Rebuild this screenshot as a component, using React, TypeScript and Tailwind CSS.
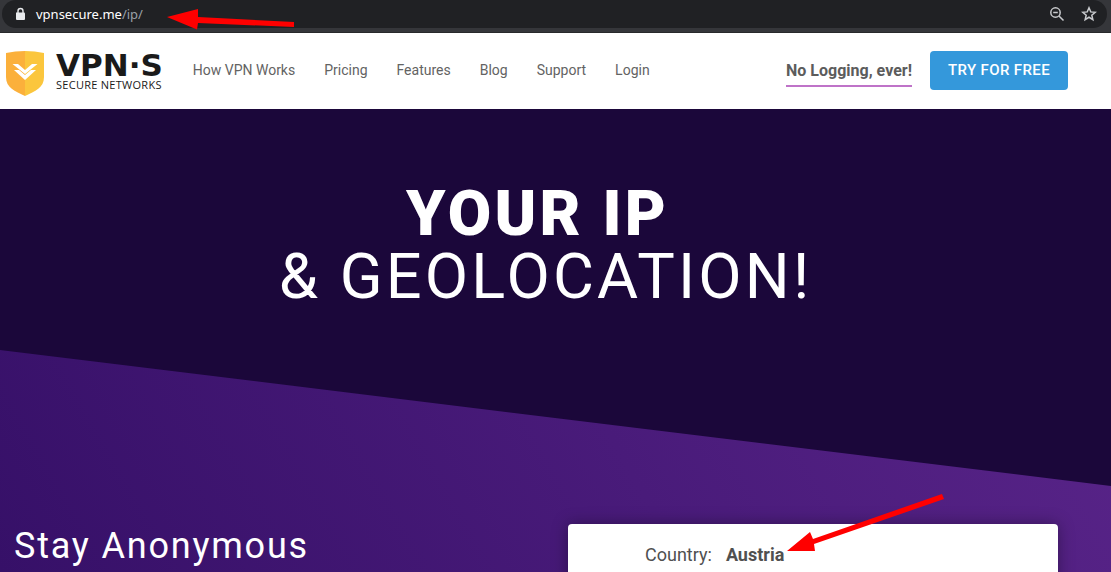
const navItems = ["How VPN Works", "Pricing", "Features", "Blog", "Support", "Login"];

function AddressBar() {
  return (
    <div className="relative border-b border-[#28292b] bg-[#35363a] pr-1 pb-1 pl-0.5">
      <div className="flex h-7 items-center rounded-full bg-[#202124] pr-2.5 pl-3">
        <svg className="h-4 w-3" viewBox="0 0 12 16" aria-hidden="true">
          <path d="M2 6.500h8a1 1 0 0 1 1 1v5.500a1 1 0 0 1-1 1H3a1 1 0 0 1-1-1z" fill="#e8eaed" />
          <path d="M4 7V5a2.500 2.500 0 0 1 5 0v2" fill="none" stroke="#e8eaed" strokeWidth="1.400" />
        </svg>
        <p className="ml-2.5 flex-1 font-['Noto_Sans','Open_Sans',sans-serif] text-[13px] leading-5 text-white">
          vpnsecure.me<span className="text-[#9aa0a6]">/ip/</span>
        </p>
        <div className="flex items-center gap-4">
          <button type="button" aria-label="Zoom" className="text-[#c8cacd]">
            <svg className="size-4" viewBox="0 0 16 16" fill="none" stroke="currentColor" strokeWidth="1.500">
              <circle cx="6.500" cy="6.500" r="4.700" />
              <path d="M4.200 6.500h4.600M10 10l4.500 4.500" />
            </svg>
          </button>
          <button type="button" aria-label="Bookmark" className="text-[#c8cacd]">
            <svg className="size-4" viewBox="0 0 16 16" fill="none" stroke="currentColor" strokeWidth="1.500">
              <path d="M8 1.800l1.750 4.100 4.450.4-3.400 2.900 1.050 4.400L8 11.250 4.150 13.600l1.050-4.400-3.400-2.900 4.450-.4z" />
            </svg>
          </button>
        </div>
      </div>
      <svg className="pointer-events-none absolute top-2 left-[167px] h-6 w-32" viewBox="0 0 128 24" aria-hidden="true">
        <path d="M0 9L31 1V9L127 14V19L31 15L30 21.500z" fill="#ff0000" />
      </svg>
    </div>
  );
}

function Logo() {
  return (
    <a href="#home" aria-label="VPN·S Secure Networks" className="flex items-center gap-3 pt-1.5 text-[#1a1a1a]">
      <svg className="h-[46px] w-[38px]" viewBox="0 0 38 46" aria-hidden="true">
        <path d="M0 3Q9 1 19 1V46C9 41 0 38 0 27z" fill="#fbb03b" />
        <path d="M38 3Q29 1 19 1V46C29 41 38 38 38 27z" fill="#fbc63d" />
        <path d="M6.500 14h5.500l7 6 7-6h5.500L19 24z" fill="#fff" />
        <path d="M8 20h5l6 5 6-5h5L19 30z" fill="#fff" />
      </svg>
      <span className="flex flex-col">
        <span className="font-['DejaVu_Sans',sans-serif] text-[31px] leading-6 font-bold">VPN·S</span>
        <span className="font-['Open_Sans',sans-serif] text-[11px] leading-4 tracking-wide">SECURE NETWORKS</span>
      </span>
    </a>
  );
}

function Header() {
  return (
    <header className="flex h-[76px] items-center bg-white pr-[43px] pb-0.5 pl-1.5 text-[#636363]">
      <Logo />
      <nav className="ml-[30px] flex gap-[29px] text-sm leading-6">
        {navItems.map((item) => (
          <a key={item} href="#nav" className="whitespace-nowrap">
            {item}
          </a>
        ))}
      </nav>
      <p className="ml-auto border-b-2 border-[#bf73c8] pt-1 text-base leading-7 font-bold whitespace-nowrap text-[#5c5c5c]">
        No Logging, ever!
      </p>
      <a
        href="#trial"
        className="ml-[18px] rounded bg-[#3498db] px-[18px] py-2 text-[15px] leading-[23px] font-medium tracking-wide whitespace-nowrap text-white"
      >
        TRY FOR FREE
      </a>
    </header>
  );
}

function Hero() {
  return (
    <main className="relative flex-1 overflow-hidden bg-[linear-gradient(60deg,#361068,#5c268c)]">
      <div
        aria-hidden="true"
        className="absolute inset-0 bg-[#1b073a] [clip-path:polygon(0_0,100%_0,100%_calc(241px+12.24vw),0_241px)]"
      />
      <div className="relative">
        <h1 className="pt-[73px] pr-5 text-center text-[63px] leading-[63px] font-normal tracking-wider text-white">
          <strong className="block pr-4 font-black">YOUR IP</strong>
          &amp; GEOLOCATION!
        </h1>
        <div className="mt-[216px] grid grid-cols-[568px_1fr] pr-[53px]">
          <h2 className="pl-3.5 text-4xl leading-[44px] tracking-wider text-white">Stay Anonymous</h2>
          <dl className="flex items-start gap-3.5 rounded bg-white px-[77px] pt-[19px] pb-6 text-lg leading-6 text-[#505050] shadow-[0_0_16px_rgba(0,0,0,0.35)]">
            <dt>Country:</dt>
            <dd className="font-bold">Austria</dd>
          </dl>
        </div>
      </div>
      <svg
        className="pointer-events-none absolute top-[385px] left-[787px] h-[60px] w-40"
        viewBox="0 0 160 60"
        aria-hidden="true"
      >
        <path d="M0 57L23 38L26 45L155 0L157 5L27 50L28 57z" fill="#ff0000" />
      </svg>
    </main>
  );
}

export default function App() {
  return (
    <div className="flex h-screen flex-col overflow-hidden font-[Roboto,sans-serif]">
      <AddressBar />
      <Header />
      <Hero />
    </div>
  );
}
